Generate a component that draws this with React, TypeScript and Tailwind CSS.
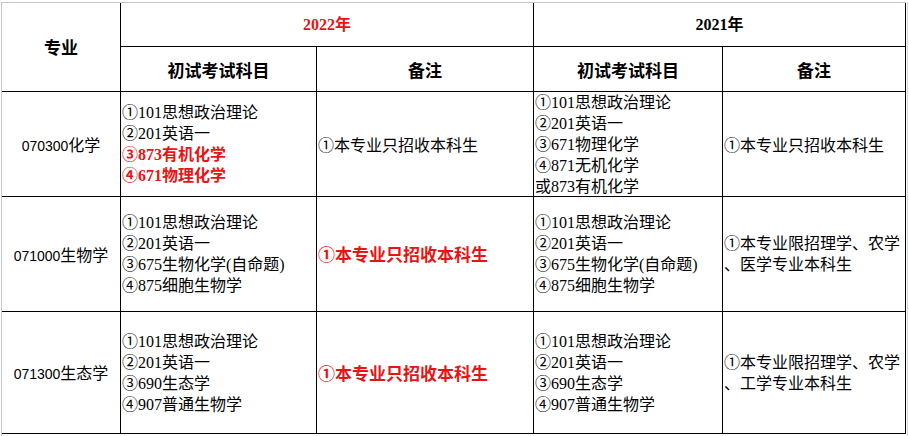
import React from "react";

const serif = { fontFamily: '"Liberation Serif", "Noto Sans CJK SC", serif' };
const sans = { fontFamily: '"Noto Sans CJK SC", sans-serif' };

const RED = "text-[#e81414]";

function Cell({
  children,
  className = "",
}: {
  children?: React.ReactNode;
  className?: string;
}) {
  return (
    <div className={`border-r border-b border-black flex items-center ${className}`}>
      {children}
    </div>
  );
}

function Lines({ items }: { items: (string | { t: string; red: boolean })[] }) {
  return (
    <div className="flex flex-col text-[16px] leading-[21px] text-black" style={serif}>
      {items.map((it, i) => (
        <div key={i} className="whitespace-nowrap h-[21px] leading-[21px]">
          {typeof it === "string" ? it : <span className={`font-bold ${RED}`}>{it.t}</span>}
        </div>
      ))}
    </div>
  );
}

function Major({ code, name }: { code: string; name: string }) {
  return (
    <div className="w-full text-center text-[16px] text-black whitespace-nowrap">
      <span className="text-[14px]" style={{ fontFamily: '"Liberation Sans", sans-serif' }}>
        {code}
      </span>
      <span style={sans}>{name}</span>
    </div>
  );
}

function Remark2({ second }: { second: string }) {
  return (
    <div className="flex flex-col text-[16px] leading-[21px] text-black" style={serif}>
      <div className="whitespace-nowrap h-[21px] leading-[21px]">①本专业限招理学、农学</div>
      <div className="whitespace-nowrap h-[21px] leading-[21px]">{second}</div>
    </div>
  );
}

export default function App() {
  return (
    <div className="w-[909px] h-[436px] bg-white overflow-hidden pt-[2px] flex">
      <div
        className="grid border-t border-l border-[#c4c4d4] ml-[1px]"
        style={{
          gridTemplateColumns: "119px 196px 217px 189px 183px",
          gridTemplateRows: "44px 45px 105px 115px 122px",
        }}
      >
        <Cell className="row-span-2 justify-center">
          <span className="text-[17px] font-bold text-black" style={sans}>
            专业
          </span>
        </Cell>
        <Cell className="col-span-2 justify-center">
          <span className={`text-[16px] font-bold ${RED}`} style={serif}>
            2022年
          </span>
        </Cell>
        <Cell className="col-span-2 justify-center">
          <span className="text-[16px] font-bold text-black" style={serif}>
            2021年
          </span>
        </Cell>
        <Cell className="justify-center pt-[2px]">
          <span className="text-[17px] font-bold text-black" style={sans}>
            初试考试科目
          </span>
        </Cell>
        <Cell className="justify-center pt-[2px]">
          <span className="text-[17px] font-bold text-black" style={sans}>
            备注
          </span>
        </Cell>
        <Cell className="justify-center pt-[2px]">
          <span className="text-[17px] font-bold text-black" style={sans}>
            初试考试科目
          </span>
        </Cell>
        <Cell className="justify-center pt-[2px]">
          <span className="text-[17px] font-bold text-black" style={sans}>
            备注
          </span>
        </Cell>

        {/* Row 1 */}
        <Cell>
          <Major code="070300" name="化学" />
        </Cell>
        <Cell className="pl-[1px]">
          <Lines
            items={[
              "①101思想政治理论",
              "②201英语一",
              { t: "③873有机化学", red: true },
              { t: "④671物理化学", red: true },
            ]}
          />
        </Cell>
        <Cell className="pl-[1px]">
          <span className="text-[16px] text-black whitespace-nowrap" style={sans}>
            ①本专业只招收本科生
          </span>
        </Cell>
        <Cell className="pl-[1px]">
          <Lines
            items={[
              "①101思想政治理论",
              "②201英语一",
              "③671物理化学",
              "④871无机化学",
              "或873有机化学",
            ]}
          />
        </Cell>
        <Cell className="pl-[1px]">
          <span className="text-[16px] text-black whitespace-nowrap" style={sans}>
            ①本专业只招收本科生
          </span>
        </Cell>

        {/* Row 2 */}
        <Cell>
          <Major code="071000" name="生物学" />
        </Cell>
        <Cell className="pl-[1px]">
          <Lines
            items={["①101思想政治理论", "②201英语一", "③675生物化学(自命题)", "④875细胞生物学"]}
          />
        </Cell>
        <Cell className="pl-[1px]">
          <span className={`text-[17px] font-bold ${RED} whitespace-nowrap`} style={sans}>
            ①本专业只招收本科生
          </span>
        </Cell>
        <Cell className="pl-[1px]">
          <Lines
            items={["①101思想政治理论", "②201英语一", "③675生物化学(自命题)", "④875细胞生物学"]}
          />
        </Cell>
        <Cell className="pl-[1px]">
          <Remark2 second="、医学专业本科生" />
        </Cell>

        {/* Row 3 */}
        <Cell>
          <Major code="071300" name="生态学" />
        </Cell>
        <Cell className="pl-[1px]">
          <Lines items={["①101思想政治理论", "②201英语一", "③690生态学", "④907普通生物学"]} />
        </Cell>
        <Cell className="pl-[1px]">
          <span className={`text-[17px] font-bold ${RED} whitespace-nowrap`} style={sans}>
            ①本专业只招收本科生
          </span>
        </Cell>
        <Cell className="pl-[1px]">
          <Lines items={["①101思想政治理论", "②201英语一", "③690生态学", "④907普通生物学"]} />
        </Cell>
        <Cell className="pl-[1px]">
          <Remark2 second="、工学专业本科生" />
        </Cell>
      </div>
      <div className="w-[1px] ml-[1px] self-stretch bg-[#d6d6e0]" />
    </div>
  );
}
